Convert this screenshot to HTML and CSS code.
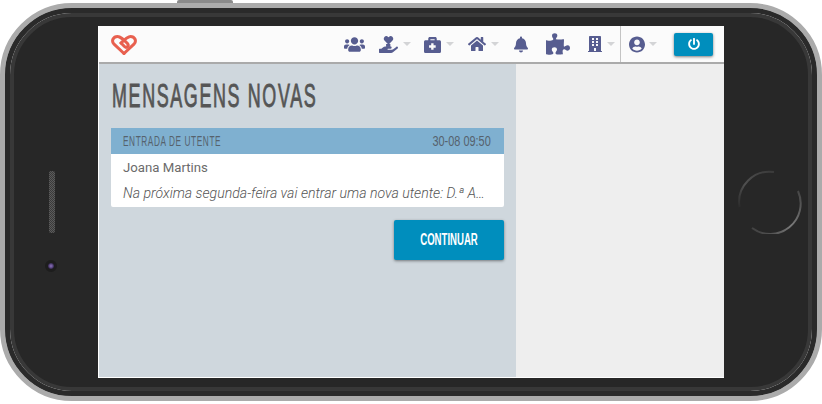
FILE: index.html
```html
<!DOCTYPE html>
<html lang="en">

<head>
    <meta charset="UTF-8">
    <title>Mensagens novas</title>
    <link rel="stylesheet" href="styles.css">
</head>

<body>
    <div class="phone">
        <span class="side-btn top-btn"></span>
        <span class="side-btn bottom-btn b1"></span>
        <span class="side-btn bottom-btn b2"></span>
        <span class="side-btn bottom-btn b3"></span>
        <div class="phone-rim">
            <div class="phone-face">
                <span class="speaker"></span>
                <span class="camera"></span>
                <svg class="home-ring" viewBox="0 0 64 64">
                    <defs>
                        <linearGradient id="ring-a" x1="0" y1="1" x2="1" y2="0">
                            <stop offset="0" stop-color="#2c2c2c"/>
                            <stop offset="0.4" stop-color="#505050"/>
                            <stop offset="1" stop-color="#3a3a3a"/>
                        </linearGradient>
                        <linearGradient id="ring-b" x1="1" y1="0" x2="0" y2="1">
                            <stop offset="0" stop-color="#444"/>
                            <stop offset="0.5" stop-color="#7a7a7a"/>
                            <stop offset="1" stop-color="#3a3a3a"/>
                        </linearGradient>
                    </defs>
                    <path d="M1.500 37A30.500 30.500 0 0 1 36 2" fill="none" stroke="url(#ring-a)" stroke-width="2"/>
                    <path d="M60 21A30.500 30.500 0 0 1 14 58" fill="none" stroke="url(#ring-b)" stroke-width="2"/>
                </svg>
                <div class="screen">
                    <header class="topbar">
                        <svg class="logo" viewBox="0 0 26 20">
                            <path d="M13 18.500L2.800 8.800C.2 5.800 2.200 1.500 6.500 1.500 9.500 1.500 11.500 3.500 16.500 8.500 18.500 11 15.500 13.500 13.500 11.500L10 8" />
                            <path d="M13 18.500L23.200 8.800C25.800 5.800 23.800 1.500 19.500 1.500 16.500 1.500 14 4 10 8" />
                        </svg>
                        <nav class="nav">
                            <svg class="ico ico-users" viewBox="0 0 640 512"><path d="M96 224c35.3 0 64-28.7 64-64s-28.7-64-64-64-64 28.7-64 64 28.7 64 64 64zm448 0c35.3 0 64-28.7 64-64s-28.7-64-64-64-64 28.7-64 64 28.7 64 64 64zm32 32h-64c-17.6 0-33.5 7.1-45.1 18.6 40.3 22.1 68.9 62 75.1 109.4h66c17.7 0 32-14.3 32-32v-32c0-35.3-28.7-64-64-64zm-256 0c61.9 0 112-50.1 112-112S381.9 32 320 32 208 82.1 208 144s50.1 112 112 112zm76.8 32h-8.3c-20.8 10-43.9 16-68.5 16s-47.6-6-68.5-16h-8.3C179.6 288 128 339.6 128 403.2V432c0 26.5 21.5 48 48 48h288c26.5 0 48-21.5 48-48v-28.8c0-63.6-51.6-115.2-115.2-115.2zm-223.7-13.4C161.5 263.1 145.6 256 128 256H64c-35.3 0-64 28.7-64 64v32c0 17.7 14.3 32 32 32h65.9c6.3-47.4 34.9-87.3 75.2-109.4z"/></svg>
                            <svg class="ico ico-hand" viewBox="0 0 576 512"><path d="M275.3 250.5c7 7.4 18.4 7.4 25.5 0l108.9-114.2c31.6-33.2 29.8-88.2-5.600-118.8-30.8-26.7-76.7-21.9-104.9 7.7L288 36.9l-11.1-11.6C248.7-4.4 202.800-9.2 172 17.5c-35.3 30.6-37.2 85.6-5.600 118.800l108.9 114.2zm290 77.6c-11.8-10.7-30.2-10-42.600 0L430.3 402c-11.3 9.1-25.4 14-40 14H272c-8.800 0-16-7.2-16-16s7.2-16 16-16h78.3c15.9 0 30.7-10.9 33.3-26.6 3.3-20-12.1-37.4-31.6-37.4H192c-27 0-53.1 9.3-74.1 26.3L71.4 384H16c-8.800 0-16 7.2-16 16v96c0 8.800 7.2 16 16 16h356.8c14.5 0 28.6-4.9 40-14L564 377c15.2-12.1 16.4-35.3 1.3-48.9z"/><rect x="215" y="240" width="130" height="90"/></svg>
                            <span class="caret"></span>
                            <svg class="ico ico-case" viewBox="0 0 512 512"><path d="M464 128h-80V80c0-26.5-21.5-48-48-48H176c-26.5 0-48 21.5-48 48v48H48c-26.5 0-48 21.5-48 48v288c0 26.5 21.5 48 48 48h416c26.5 0 48-21.5 48-48V176c0-26.5-21.5-48-48-48zM192 96h128v32H192V96zm160 248c0 4.4-3.6 8-8 8h-56v56c0 4.4-3.6 8-8 8h-56c-4.4 0-8-3.6-8-8v-56h-56c-4.4 0-8-3.6-8-8v-56c0-4.4 3.6-8 8-8h56v-56c0-4.4 3.6-8 8-8h56c4.4 0 8 3.6 8 8v56h56c4.4 0 8 3.6 8 8v56z"/></svg>
                            <span class="caret"></span>
                            <svg class="ico ico-home" viewBox="0 0 576 512"><path d="M280.37 148.26L96 300.11V464a16 16 0 0 0 16 16l112.06-.29a16 16 0 0 0 15.92-16V368a16 16 0 0 1 16-16h64a16 16 0 0 1 16 16v95.64a16 16 0 0 0 16 16.05L464 480a16 16 0 0 0 16-16V300L295.67 148.26a12.19 12.19 0 0 0-15.3 0zM571.6 251.47L488 182.56V44.05a12 12 0 0 0-12-12h-56a12 12 0 0 0-12 12v72.61L318.47 43a48 48 0 0 0-61 0L4.34 251.47a12 12 0 0 0-1.6 16.9l25.5 31A12 12 0 0 0 45.15 301l235.22-193.74a12.19 12.19 0 0 1 15.3 0L530.9 301a12 12 0 0 0 16.9-1.6l25.5-31a12 12 0 0 0-1.7-16.93z"/></svg>
                            <span class="caret"></span>
                            <svg class="ico ico-bell" viewBox="0 0 448 512"><path d="M224 512c35.32 0 63.97-28.65 63.97-64H160.03c0 35.35 28.65 64 63.97 64zm215.39-149.71c-19.32-20.76-55.47-51.99-55.47-154.29 0-77.7-54.48-139.9-127.94-155.16V32c0-17.67-14.32-32-31.98-32s-31.98 14.33-31.98 32v20.84C118.56 68.1 64.08 130.3 64.08 208c0 102.3-36.15 133.53-55.47 154.29-6 6.45-8.66 14.16-8.61 21.71.11 16.4 12.98 32 32.1 32h383.8c19.12 0 32-15.6 32.1-32 .05-7.55-2.61-15.27-8.61-21.71z"/></svg>
                            <svg class="ico ico-puzzle" viewBox="0 0 576 512"><path d="M519.4 288.7c-41.5 0-59.5 31.6-82 31.6-20 0-5.4-80-5.4-176 0 0-120 12-196.300-3.300 0-35.800 36.300-46.300 36.300-86 0-35.500-28.100-54.700-61.500-54.700-34.600 0-66.300 18.900-66.300 56.300 0 41.400 31.700 59.300 31.700 81.800C175.900 207.700 0 166.800 0 166.800V500s178.600 41 178.600-28.700c0-22.500-40-40.100-40-81.500 0-37.400 29.300-56.300 63.600-56.300 33.700 0 61.800 19.200 61.800 54.700 0 39.700-36.300 50.200-36.300 86 0 60.800 129.700 25.700 181.200 25.700 0 0-34.700-120.100 25.800-120.100 36 0 46.400 36.200 86.300 36.200C556.700 416 576 388 576 354.400c0-34.200-19-65.700-56.600-65.700z"/></svg>
                            <svg class="ico ico-building" viewBox="0 0 448 512"><path d="M436 480h-20V24c0-13.255-10.745-24-24-24H56C42.745 0 32 10.745 32 24v456H12c-6.627 0-12 5.373-12 12v20h448v-20c0-6.627-5.373-12-12-12zM128 76c0-6.627 5.373-12 12-12h40c6.627 0 12 5.373 12 12v40c0 6.627-5.373 12-12 12h-40c-6.627 0-12-5.373-12-12V76zm0 96c0-6.627 5.373-12 12-12h40c6.627 0 12 5.373 12 12v40c0 6.627-5.373 12-12 12h-40c-6.627 0-12-5.373-12-12v-40zm52 148h-40c-6.627 0-12-5.373-12-12v-40c0-6.627 5.373-12 12-12h40c6.627 0 12 5.373 12 12v40c0 6.627-5.373 12-12 12zm76 160h-64v-84c0-6.627 5.373-12 12-12h40c6.627 0 12 5.373 12 12v84zm64-172c0 6.627-5.373 12-12 12h-40c-6.627 0-12-5.373-12-12v-40c0-6.627 5.373-12 12-12h40c6.627 0 12 5.373 12 12v40zm0-96c0 6.627-5.373 12-12 12h-40c-6.627 0-12-5.373-12-12v-40c0-6.627 5.373-12 12-12h40c6.627 0 12 5.373 12 12v40zm0-96c0 6.627-5.373 12-12 12h-40c-6.627 0-12-5.373-12-12V76c0-6.627 5.373-12 12-12h40c6.627 0 12 5.373 12 12v40z"/></svg>
                            <span class="caret"></span>
                        </nav>
                        <div class="account">
                            <svg class="ico ico-user" viewBox="0 0 496 512"><path d="M248 8C111 8 0 119 0 256s111 248 248 248 248-111 248-248S385 8 248 8zm0 96c48.600 0 88 39.400 88 88s-39.400 88-88 88-88-39.400-88-88 39.400-88 88-88zm0 344c-58.700 0-111.300-26.600-146.500-68.200 18.800-35.400 55.600-59.800 98.500-59.800 2.400 0 4.800.4 7.100 1.100 13 4.200 26.600 6.900 40.900 6.900 14.300 0 28-2.700 40.900-6.900 2.300-.7 4.700-1.100 7.100-1.100 42.900 0 79.700 24.400 98.500 59.800C359.300 421.400 306.700 448 248 448z"/></svg>
                            <span class="caret"></span>
                            <button class="power">
                                <svg viewBox="0 0 512 512"><path d="M400 54.100c63 45 104 118.600 104 201.900 0 136.800-110.800 247.700-247.500 248C120 504.300 8.200 393 8 256.400 7.900 173.100 48.900 99.300 111.800 54.200c11.700-8.300 28-4.800 35 7.700L162.600 90c5.900 10.500 3.100 23.800-6.600 31-41.500 30.800-68 79.600-68 134.900-.1 92.300 74.500 168.100 168 168.100 91.600 0 168.600-74.200 168-169.100-.3-51.800-24.700-101.800-68.100-134-9.700-7.200-12.400-20.500-6.500-30.900l15.800-28.100c7-12.400 23.200-16.100 34.800-7.800zM296 264V24c0-13.300-10.700-24-24-24h-32c-13.300 0-24 10.700-24 24v240c0 13.300 10.700 24 24 24h32c13.300 0 24-10.700 24-24z"/></svg>
                            </button>
                        </div>
                    </header>
                    <div class="content">
                        <main class="panel">
                            <h1 class="title"><span class="narrow">Mensagens novas</span></h1>
                            <article class="card">
                                <div class="card-head">
                                    <span class="head-label">Entrada de utente</span>
                                    <span class="head-date">30-08 09:50</span>
                                </div>
                                <div class="card-body">
                                    <p class="sender">Joana Martins</p>
                                    <p class="preview">Na próxima segunda-feira vai entrar uma nova utente: D.ª A…</p>
                                </div>
                            </article>
                            <div class="actions">
                                <button class="continue"><span class="continue-label">Continuar</span></button>
                            </div>
                        </main>
                        <aside class="side"></aside>
                    </div>
                </div>
            </div>
        </div>
    </div>
</body>

</html>
```

FILE: styles.css
```css
body {
    margin: 0;
    background-color: #fff;
    font-family: Roboto, "Liberation Sans", Arial, sans-serif;
    overflow: hidden;
}

/* phone frame */
.phone {
    position: relative;
    box-sizing: border-box;
    width: 822px;
    height: 398px;
    margin-top: 3px;
    border: 5px solid #ababab;
    border-radius: 72px;
    box-shadow: inset 0 0 0 1px #8d8d8d;
}

.phone-rim {
    height: 100%;
    box-sizing: border-box;
    border: 5px solid #2a2a2a;
    border-radius: 67px;
}

.phone-face {
    position: relative;
    height: 100%;
    box-sizing: border-box;
    display: flex;
    align-items: center;
    justify-content: center;
    border: 4px solid #383838;
    border-radius: 62px;
    background-color: #272727;
}

.side-btn {
    position: absolute;
    height: 3px;
    background-color: #8a8a8a;
}

.top-btn {
    top: -8px;
    left: 172px;
    width: 56px;
    border-radius: 2px 2px 0 0;
}

.bottom-btn {
    bottom: -8px;
    border-radius: 0 0 2px 2px;
}

.b1 {
    left: 99px;
    width: 32px;
}

.b2 {
    left: 172px;
    width: 57px;
}

.b3 {
    left: 247px;
    width: 57px;
}

.speaker {
    position: absolute;
    left: 35px;
    top: 154px;
    width: 6px;
    height: 62px;
    border-radius: 2px;
    background: repeating-conic-gradient(#5c5c5c 0 25%, #3a3a3a 0 50%) 0 0 / 2px 2px;
}

.camera {
    position: absolute;
    left: 31px;
    top: 243px;
    width: 6px;
    height: 6px;
    border: 3px solid #1d1d1d;
    border-radius: 50%;
    background: radial-gradient(#7a62a8 20%, #2f2447 75%);
}

.home-ring {
    position: absolute;
    left: 724px;
    top: 153px;
    width: 64px;
    height: 64px;
}

/* screen */
.screen {
    width: 626px;
    height: 352px;
    box-sizing: border-box;
    display: flex;
    flex-direction: column;
    border-left: 1px solid #fff;
    border-bottom: 1px solid #fff;
    background-color: #eee;
}

.topbar {
    flex: 0 0 38px;
    box-sizing: border-box;
    display: flex;
    align-items: center;
    border-bottom: 2px solid #aaa;
    background-color: #fbfbfb;
}

.logo {
    width: 26px;
    height: 20px;
    margin-left: 12px;
    margin-top: 1px;
    fill: none;
    stroke: #e8604f;
    stroke-width: 3;
    stroke-linejoin: round;
    stroke-linecap: round;
}

.nav {
    display: flex;
    align-items: center;
    margin-left: auto;
    height: 100%;
}

.ico {
    display: block;
    fill: #575d90;
}

.ico-users {
    width: 21px;
    height: 17px;
}

.ico-hand {
    width: 19px;
    height: 17px;
    margin-left: 14px;
}

.ico-case {
    width: 17px;
    height: 17px;
    margin-left: 13px;
}

.ico-home {
    width: 18px;
    height: 16px;
    margin-left: 14px;
}

.ico-bell {
    width: 14px;
    height: 17px;
    margin-left: 15px;
}

.ico-puzzle {
    width: 24px;
    height: 22px;
    margin-left: 18px;
}

.ico-building {
    width: 14px;
    height: 16px;
    margin-left: 18px;
}

.caret {
    width: 0;
    height: 0;
    margin-left: 5px;
    border-top: 4px solid #d3d4d6;
    border-left: 4px solid transparent;
    border-right: 4px solid transparent;
}

.account {
    display: flex;
    align-items: center;
    height: 100%;
    margin-left: 5px;
    padding-left: 8px;
    padding-right: 11px;
    border-left: 1px solid #c4c4c4;
}

.ico-user {
    width: 16px;
    height: 17px;
}

.account .caret {
    margin-left: 4px;
}

.power {
    width: 39px;
    height: 23px;
    margin-left: 17px;
    padding: 0;
    display: flex;
    align-items: center;
    justify-content: center;
    border: none;
    border-radius: 2px;
    background-color: #008ebd;
    box-shadow: 0 1px 3px rgba(0, 0, 0, 0.5);
}

.power svg {
    width: 12px;
    height: 12px;
    fill: #fff;
}

.content {
    flex: 1;
    display: flex;
    min-height: 0;
}

.panel {
    width: 417px;
    box-sizing: border-box;
    padding: 0 12px;
    background-color: #cfd7dd;
}

/* no condensed font installed, so the display text is squeezed */
.title {
    margin: 14px 0 14px 1px;
    height: 36px;
    font-family: "Liberation Sans", sans-serif;
    font-size: 33px;
    line-height: 36px;
    font-weight: 400;
    white-space: nowrap;
    text-transform: uppercase;
    color: #555;
}

.narrow {
    display: inline-block;
    letter-spacing: 3px;
    transform: scaleX(0.543);
    transform-origin: left center;
    -webkit-text-stroke: 0.9px #555;
}

.card {
    background-color: #fff;
    border-radius: 2px;
}

.card-head {
    height: 26px;
    box-sizing: border-box;
    padding: 0 13px 0 12px;
    display: flex;
    align-items: center;
    justify-content: space-between;
    font-family: "Liberation Sans", sans-serif;
    font-size: 14px;
    white-space: nowrap;
    text-transform: uppercase;
    color: #56626d;
    background-color: #7fb0d0;
}

.head-label {
    letter-spacing: 1px;
    transform: scaleX(0.59);
    transform-origin: left center;
}

.head-date {
    transform: scaleX(0.78);
    transform-origin: right center;
}

.card-body {
    height: 53px;
    box-sizing: border-box;
    padding: 5px 12px 0;
    color: #6b6b6b;
}

.sender {
    margin: 0;
    font-size: 13.200px;
    line-height: 17px;
}

.preview {
    margin: 9px 0 0;
    font-size: 14.100px;
    font-weight: 300;
    line-height: 17px;
    font-style: italic;
    white-space: nowrap;
    color: #555;
}

.actions {
    display: flex;
    justify-content: flex-end;
    margin-top: 13px;
}

.continue {
    width: 110px;
    height: 40px;
    padding: 0;
    display: flex;
    align-items: center;
    justify-content: center;
    border: none;
    border-radius: 2px;
    font-family: "Liberation Sans", sans-serif;
    font-size: 16px;
    font-weight: 700;
    text-transform: uppercase;
    color: #fff;
    background-color: #008ebd;
    box-shadow: 0 1px 3px rgba(0, 0, 0, 0.45);
}

.continue-label {
    transform: scaleX(0.6);
}

.side {
    flex: 1;
}
```
